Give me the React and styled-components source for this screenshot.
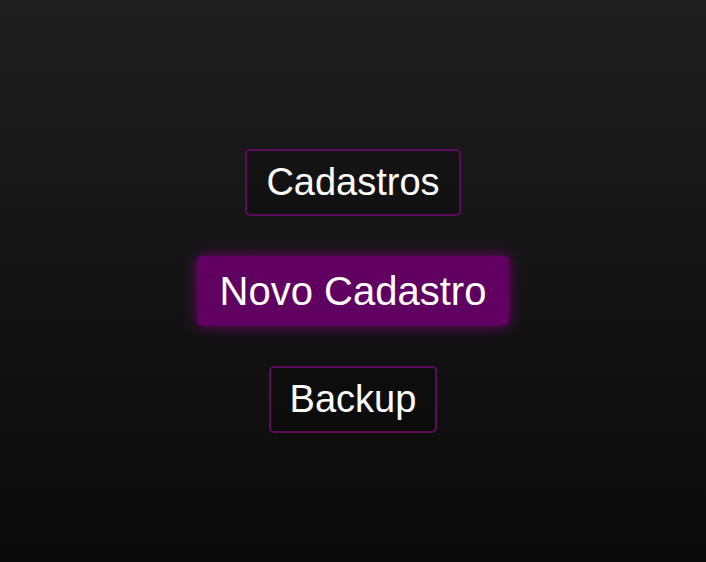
import styled, { createGlobalStyle } from "styled-components";

const GlobalStyle = createGlobalStyle`
  html, body {
    margin: 0;
    padding: 0;
  }
  body {
    font-family: "Liberation Sans", Arial, sans-serif;
    background: #0a0a0a;
  }
`;

function App() {
  const items = [
    { label: "Cadastros" },
    { label: "Novo Cadastro", primary: true },
    { label: "Backup" },
  ];

  return (
    <>
      <GlobalStyle />
      <Page>
        <Menu>
          {items.map((item) => (
            <MenuButton key={item.label} $primary={item.primary}>
              {item.label}
            </MenuButton>
          ))}
        </Menu>
      </Page>
    </>
  );
}

export default App;

const Page = styled.div`
  min-height: 100vh;
  box-sizing: border-box;
  padding-top: 19px;
  display: flex;
  align-items: center;
  justify-content: center;
  background: linear-gradient(180deg, #1e1e1e 0%, #0a0a0a 100%);
`;

const Menu = styled.nav`
  display: flex;
  flex-direction: column;
  align-items: center;
  gap: 40px;
`;

const MenuButton = styled.button`
  font-family: "Liberation Sans", Arial, sans-serif;
  font-size: ${(props) => (props.$primary ? "40px" : "38px")};
  line-height: ${(props) => (props.$primary ? "46px" : "45px")};
  padding: ${(props) => (props.$primary ? "10px 21px" : "9px 19px")};
  color: #ffffff;
  background: ${(props) => (props.$primary ? "#600060" : "rgba(0, 0, 0, 0.18)")};
  border: 2px solid ${(props) => (props.$primary ? "#600060" : "#5c0a5c")};
  border-radius: 5px;
  box-shadow: ${(props) =>
    props.$primary ? "0 0 14px rgba(150, 0, 150, 0.7)" : "none"};
  cursor: pointer;
`;
